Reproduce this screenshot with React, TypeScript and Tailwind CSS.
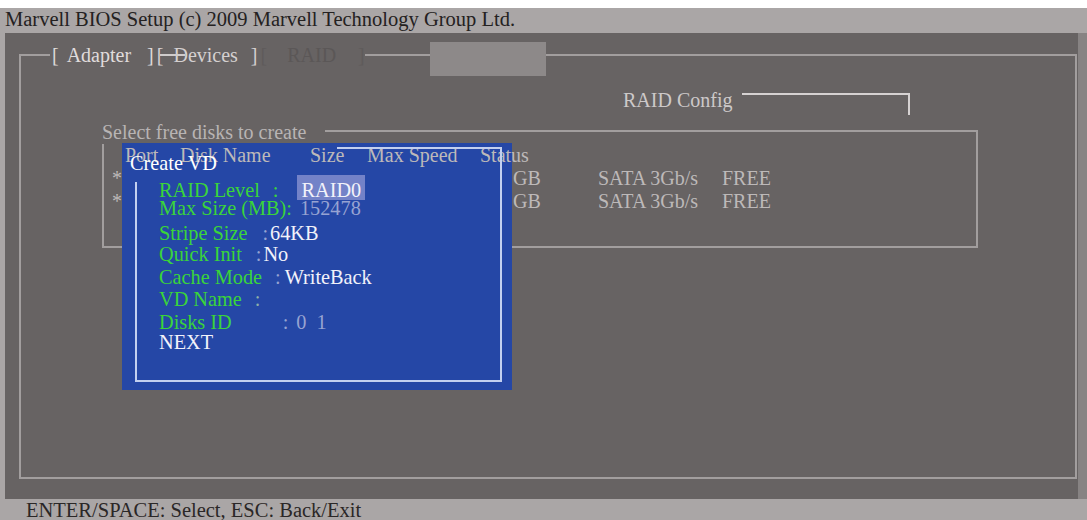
import React from "react";

const G = "text-[#3ad43a]";
const W = "text-[#f2f2fa]";
const B = "text-[#97a3d2]";

export default function App() {
  return (
    <div className="w-[1087px] h-[520px] overflow-hidden bg-[#aaa6a6] flex flex-col font-['Liberation_Serif',serif] text-[20px]">
      <div className="h-[8px] bg-white shrink-0" />
      <div className="h-[25px] shrink-0 pl-[5px] leading-[23px] text-[20.5px] text-[#242121] whitespace-nowrap">
        Marvell BIOS Setup (c) 2009 Marvell Technology Group Ltd.
      </div>
      <div className="flex h-[466px] shrink-0">
        <div className="w-[5px] shrink-0" />
        <main className="relative w-[1073px] shrink-0 bg-[#676363] pt-[21px] pl-[14px]">
          {/* Outer frame */}
          <div className="w-[1058px] h-[425px] border-l-2 border-r-2 border-b-2 border-[#a29e9e] flex flex-col">
            {/* Tabs row */}
            <div className="flex items-center h-[36px] -mt-[17px] shrink-0">
              <div className="w-[29px] h-[2px] bg-[#a29e9e]" />
              <span className="ml-[2px] leading-[24px] text-[#dcd8d8]">[</span>
              <span className="ml-[8px] leading-[24px] text-[#e0dcdc]">Adapter</span>
              <span className="ml-[16px] leading-[24px] text-[#dcd8d8]">]</span>
              <span className="relative ml-[3px] leading-[24px] text-[#d4d0d0] flex">
                <span>[</span>
                <span className="ml-[10px]">Devices</span>
                <span className="absolute left-[3px] top-[11px] w-[25px] h-[2px] bg-[#cfcbcb]" />
              </span>
              <span className="ml-[13px] leading-[24px] text-[#d4d0d0]">]</span>
              <span className="ml-[3px] leading-[24px] text-[#5f5b5b]">[</span>
              <span className="ml-[20px] leading-[24px] text-[#5b5757]">RAID</span>
              <span className="ml-[22px] leading-[24px] text-[#5f5b5b]">]</span>
              <div className="w-[65px] h-[2px] bg-[#a29e9e]" />
              <div className="self-start mt-[5px] h-[34px] w-[116px] bg-[#8d8989]" />
              <div className="flex-1 h-[2px] bg-[#a29e9e]" />
            </div>

            {/* RAID Config */}
            <div className="flex items-start mt-[15px] ml-[602px] shrink-0">
              <span className="leading-[24px] text-[#cdc9c9]">RAID Config</span>
              <div className="ml-[10px] mt-[5px] w-[168px] h-[22px] border-t-2 border-r-2 border-[#d6d2d2]" />
            </div>

            {/* Select free disks box */}
            <div className="mt-[5px] ml-[81px] w-[876px] shrink-0">
              <div className="flex h-[24px]">
                <span className="leading-[24px] text-[#b8b4b4] whitespace-nowrap">Select free disks to create</span>
                <div className="flex-1 ml-[19px] self-end h-[14px] border-t-2 border-r-2 border-[#a29e9e]" />
              </div>
              <div className="h-[104px] border-l-2 border-r-2 border-b-2 border-[#a29e9e] text-[#bdb9b9]">
                <div className="relative z-20 flex h-[23px] leading-[23px] pl-[21px] whitespace-nowrap">
                  <span className="w-[55px] shrink-0">Port</span>
                  <span className="w-[130px] shrink-0">Disk Name</span>
                  <span className="w-[57px] shrink-0">Size</span>
                  <span className="w-[113px] shrink-0">Max Speed</span>
                  <span>Status</span>
                </div>
                {[0, 1].map((i) => (
                  <div key={i} className="flex h-[23px] leading-[23px] pl-[8px] whitespace-nowrap">
                    <span className="w-[401px] shrink-0">*</span>
                    <span className="w-[85px] shrink-0">GB</span>
                    <span className="w-[124px] shrink-0">SATA 3Gb/s</span>
                    <span>FREE</span>
                  </div>
                ))}
              </div>
            </div>
          </div>

          {/* Create VD popup background */}
          <div className="absolute left-[117px] top-[110px] w-[390px] h-[247px] bg-[#2547a6] z-10" />

          {/* Create VD popup content */}
          <div className="absolute left-[130px] top-[114px] w-[367px] h-[235px] z-30 border-r-2 border-b-2 border-[#c3d0f0] flex flex-col text-[20.3px]">
            <div className="h-[2px] flex justify-end shrink-0">
              <div className="w-[163px] h-[2px] bg-[#c3d0f0]" />
            </div>
            <div className="h-[33px] shrink-0">
              <span className="block -ml-[5px] mt-[2px] leading-[24px] text-white">Create VD</span>
            </div>
            <div className="flex-1 border-l-2 border-[#c3d0f0] pl-[22px] flex flex-col whitespace-pre">
              <div className="flex items-start h-[22px] leading-[22px] -mt-[3px]">
                <span className={G}>RAID Level</span>
                <span className={`ml-[13px] ${G}`}>:</span>
                <span className={`ml-[19px] px-[4px] -mt-[4px] pt-[4px] h-[25px] bg-[#7382c8] ${W}`}>RAID0</span>
              </div>
              <div className="flex items-start h-[22px] leading-[22px] -mt-[4px]">
                <span className={G}>Max Size (MB):</span>
                <span className={`ml-[8px] ${B}`}>152478</span>
              </div>
              <div className="flex items-start h-[22px] leading-[22px] mt-[3px]">
                <span className={G}>Stripe Size</span>
                <span className={`ml-[15px] ${B}`}>:</span>
                <span className={`ml-[2px] ${W}`}>64KB</span>
              </div>
              <div className="flex items-start h-[22px] leading-[22px] -mt-[1px]">
                <span className={G}>Quick Init</span>
                <span className={`ml-[14px] ${B}`}>:</span>
                <span className={`ml-[2px] ${W}`}>No</span>
              </div>
              <div className="flex items-start h-[22px] leading-[22px] mt-[1px]">
                <span className={G}>Cache Mode</span>
                <span className={`ml-[13px] ${B}`}>:</span>
                <span className={`ml-[4px] ${W}`}>WriteBack</span>
              </div>
              <div className="flex items-start h-[22px] leading-[22px]">
                <span className={G}>VD Name</span>
                <span className={`ml-[13px] text-[#8fb0a8]`}>:</span>
              </div>
              <div className="flex items-start h-[22px] leading-[22px] mt-[1px]">
                <span className={G}>Disks ID</span>
                <span className={`ml-[51px] ${B}`}>:</span>
                <span className={`ml-[8px] ${B}`}>0</span>
                <span className={`ml-[10px] ${B}`}>1</span>
              </div>
              <div className="flex items-start h-[22px] leading-[22px] -mt-[2px]">
                <span className={W}>NEXT</span>
              </div>
            </div>
          </div>
        </main>
        <div className="flex-1 bg-[#878383]" />
      </div>
      <div className="h-[21px] shrink-0 pl-[26px] leading-[22px] text-[20.5px] text-[#2a2727] whitespace-nowrap">
        ENTER/SPACE: Select, ESC: Back/Exit
      </div>
    </div>
  );
}
